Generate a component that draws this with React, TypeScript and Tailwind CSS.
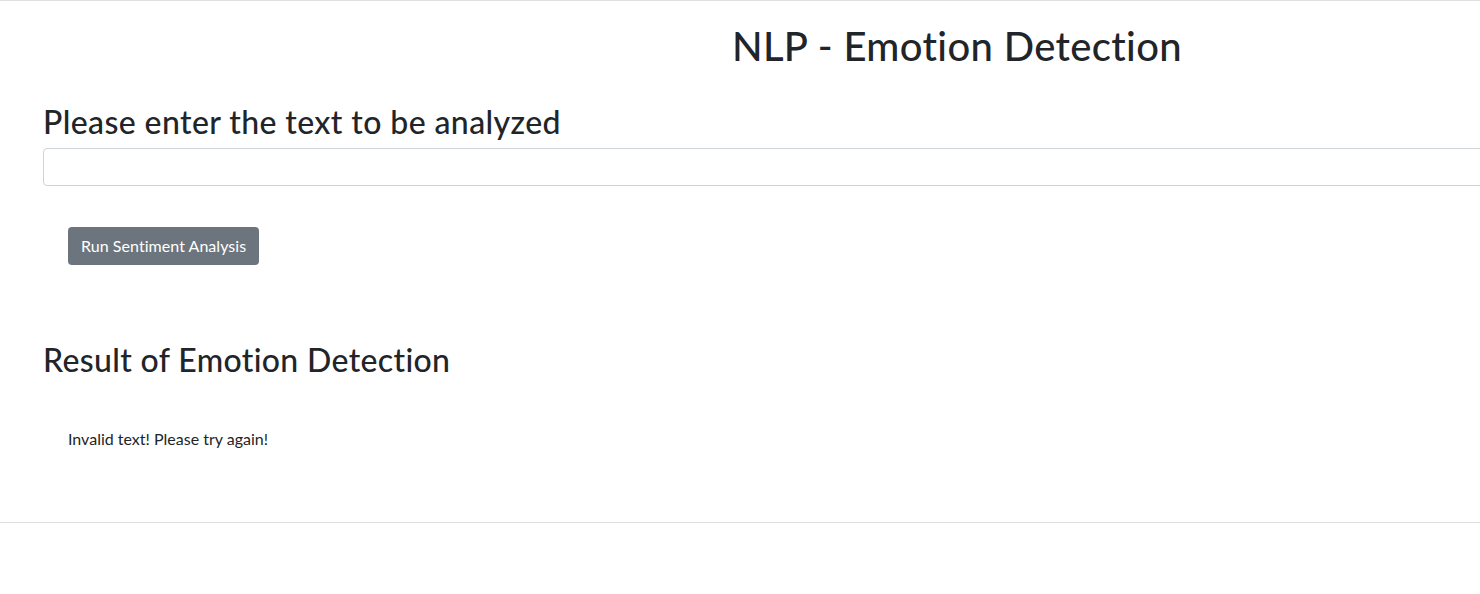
export default function App() {
  return (
    <div
      className="w-full overflow-hidden bg-white text-[#212529] [font-variant-ligatures:none]"
      style={{ fontFamily: 'Lato, "Noto Sans", sans-serif' }}
    >
      <div className="w-[1914px] border-t border-[#dfdfdf]">
        <h1 className="mt-[21px] text-center text-[40px] leading-[48px] font-medium tracking-[0.35px]">NLP - Emotion Detection</h1>

        <div className="px-[43px]">
          <h2 className="mt-[33px] text-[32px] leading-[38px] font-medium tracking-[0.4px]">Please enter the text to be analyzed</h2>
          <input
            type="text"
            className="mt-[7px] block h-[38px] w-full rounded border border-[#ced4da] bg-white px-3 text-base outline-none"
          />

          <div className="pl-[25px]">
            <button className="mt-[41px] h-[38px] rounded bg-[#6c757d] px-[13px] text-base tracking-[0.05px] text-white">
              Run Sentiment Analysis
            </button>
          </div>

          <h2 className="mt-[76px] text-[32px] leading-[38px] font-medium tracking-[0.35px]">Result of Emotion Detection</h2>

          <div className="mt-[48px] pl-[25px] text-base leading-6">Invalid text! Please try again!</div>
        </div>

        <hr className="mt-[71px] border-t border-[#dfdfdf]" />
        <div className="h-[70px]" />
      </div>
    </div>
  );
}
